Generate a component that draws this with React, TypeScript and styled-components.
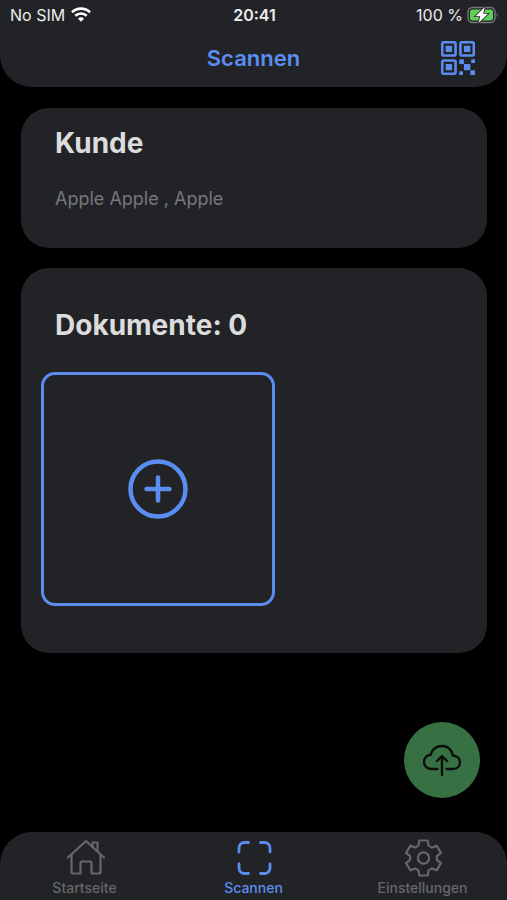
import React from "react";
import styled, { createGlobalStyle } from "styled-components";

const color = {
  page: "#000000",
  panel: "#222326",
  accent: "#5b8df0",
  text: "#dcdcdc",
  status: "#ececec",
  muted: "#77787a",
  tab: "#66676a",
  upload: "#377143",
  battery: "#5fce5b",
};

const GlobalStyle = createGlobalStyle`
  * { box-sizing: border-box; }
  body {
    margin: 0;
    background: ${color.page};
    color: ${color.text};
    font-family: Inter, "Liberation Sans", sans-serif;
  }
  button { font: inherit; }
  svg { display: block; }
`;

const Screen = styled.div`
  min-height: 100vh;
  display: flex;
  flex-direction: column;
`;

const Header = styled.header`
  background: ${color.panel};
  border-radius: 0 0 32px 32px;
`;

const StatusBar = styled.div`
  display: grid;
  grid-template-columns: 1fr auto 1fr;
  align-items: center;
  height: 29px;
  padding: 0 8px 0 10px;
  color: ${color.status};
  font-size: 16px;
  line-height: 20px;
`;

const StatusGroup = styled.div<{ $end?: boolean }>`
  display: flex;
  align-items: center;
  gap: ${(p) => (p.$end ? 4 : 6)}px;
  justify-content: ${(p) => (p.$end ? "flex-end" : "flex-start")};
`;

const Clock = styled.time`
  font-weight: 600;
`;

const TitleBar = styled.div`
  display: grid;
  grid-template-columns: 1fr auto 1fr;
  align-items: center;
  height: 58px;
  padding: 0 32px;
`;

const Title = styled.h1`
  grid-column: 2;
  margin: 0;
  color: ${color.accent};
  font-size: 22px;
  line-height: 28px;
  font-weight: 600;
`;

const IconButton = styled.button`
  justify-self: end;
  padding: 0;
  border: 0;
  background: none;
  color: ${color.accent};
  cursor: pointer;
`;

const Main = styled.main`
  flex: 1;
  display: flex;
  flex-direction: column;
  gap: 20px;
  padding: 21px 20px 34px 21px;
`;

const Card = styled.section<{ $roomy?: boolean }>`
  background: ${color.panel};
  border-radius: 28px;
  padding: ${(p) => (p.$roomy ? "40px 20px 47px" : "18px 20px 37px")};
`;

const CardTitle = styled.h2`
  margin: 0;
  padding-left: 14px;
  font-size: 28px;
  line-height: 34px;
  font-weight: 700;
`;

const CardText = styled.p`
  margin: 27px 0 0;
  padding-left: 14px;
  color: ${color.muted};
  font-size: 18px;
  line-height: 24px;
`;

const AddTile = styled.button`
  display: flex;
  align-items: center;
  justify-content: center;
  width: 55%;
  aspect-ratio: 1;
  margin-top: 30px;
  padding: 0;
  border: 3px solid ${color.accent};
  border-radius: 14px;
  background: none;
  color: ${color.accent};
  cursor: pointer;
`;

const UploadButton = styled.button`
  display: flex;
  align-items: center;
  justify-content: center;
  align-self: flex-end;
  width: 76px;
  height: 76px;
  margin-top: auto;
  margin-right: 7px;
  padding: 0;
  border: 0;
  border-radius: 50%;
  background: ${color.upload};
  color: #0a0f0b;
  cursor: pointer;
`;

const TabBar = styled.nav`
  display: grid;
  grid-template-columns: repeat(3, 1fr);
  height: 68px;
  background: ${color.panel};
  border-radius: 32px 32px 0 0;
`;

const Tab = styled.a<{ $active?: boolean }>`
  display: flex;
  flex-direction: column;
  align-items: center;
  gap: 3px;
  padding-top: 5px;
  color: ${(p) => (p.$active ? color.accent : color.tab)};
  font-size: 14px;
  line-height: 16px;
  font-weight: 500;
  text-decoration: none;
`;

const WifiIcon = () => (
  <svg width="20" height="15" viewBox="0 0 20 15" fill="none" stroke="#fff" strokeWidth="2.6" aria-hidden="true">
    <path d="M1 5.2a13 13 0 0 1 18 0" />
    <path d="M4.3 8.8a8.2 8.2 0 0 1 11.4 0" />
    <path d="M10 14.8 7 11.7a4.3 4.3 0 0 1 6 0z" fill="#fff" stroke="none" />
  </svg>
);

const BatteryIcon = () => (
  <svg width="32" height="18" viewBox="0 0 32 18" aria-hidden="true">
    <rect x="1" y="1.5" width="27" height="15" rx="4.5" fill="none" stroke="#77797c" strokeWidth="1.4" />
    <rect x="3" y="3.5" width="23" height="11" rx="2.5" fill={color.battery} />
    <path d="M29.6 7v4c1.4-.5 1.4-3.5 0-4z" fill="#77797c" />
    <path
      d="M17.8 1 8.5 10.2h4.800L11.500 17 21 7.800h-4.800z"
      fill="#fff"
      stroke={color.panel}
      strokeWidth="1.6"
      paintOrder="stroke"
    />
  </svg>
);

const QrIcon = () => (
  <svg width="34" height="34" viewBox="32 32 448 448" fill="currentColor" aria-hidden="true">
    <g fill="none" stroke="currentColor" strokeWidth="34">
      <rect x="48" y="48" width="176" height="176" rx="20" />
      <rect x="288" y="48" width="176" height="176" rx="20" />
      <rect x="48" y="288" width="176" height="176" rx="20" />
    </g>
    <rect x="94" y="94" width="84" height="84" rx="8" />
    <rect x="334" y="94" width="84" height="84" rx="8" />
    <rect x="94" y="334" width="84" height="84" rx="8" />
    <rect x="334" y="334" width="84" height="84" rx="8" />
    <rect x="272" y="272" width="62" height="62" rx="8" />
    <rect x="418" y="418" width="62" height="62" rx="8" />
    <rect x="430" y="272" width="50" height="50" rx="8" />
    <rect x="272" y="430" width="50" height="50" rx="8" />
  </svg>
);

const AddIcon = () => (
  <svg width="60" height="60" viewBox="0 0 60 60" fill="none" stroke="currentColor" strokeWidth="4.5" strokeLinecap="round" aria-hidden="true">
    <circle cx="30" cy="30" r="27.5" />
    <path d="M30 18.500v23M18.500 30h23" />
  </svg>
);

const CloudUploadIcon = () => (
  <svg width="40" height="34" viewBox="0 0 40 34" fill="none" stroke="currentColor" strokeWidth="2.4" strokeLinecap="round" strokeLinejoin="round" aria-hidden="true">
    <path d="M15.500 26H9.500C4.800 26 2 22.800 2 18.800c0-3.900 2.800-6.600 6.700-7.100C10.200 6.200 14.500 3 20 3c5.900 0 10 4 10.800 9.500 4.300.3 7.200 2.900 7.200 6.800 0 4.200-3 6.700-7.200 6.700h-6.300" />
    <path d="M20 32V13.500M15 18l5-4.800 5 4.800" />
  </svg>
);

const HomeIcon = () => (
  <svg width="40" height="40" viewBox="0 0 40 40" fill="none" stroke="currentColor" strokeWidth="2.2" strokeLinecap="round" strokeLinejoin="round" aria-hidden="true">
    <path d="M3 20.500 21 4 39 20.500" />
    <path d="M6.500 17.500V35a1.500 1.500 0 0 0 1.500 1.500H15.500V26a1.500 1.500 0 0 1 1.500-1.500h8A1.500 1.500 0 0 1 26.500 26v10.500h7.500a1.500 1.500 0 0 0 1.500-1.500V17.500" />
    <path d="M27.500 9.500V5.500H32.500V14" />
  </svg>
);

const ScanIcon = () => (
  <svg width="40" height="40" viewBox="0 0 40 40" fill="none" stroke="currentColor" strokeWidth="2.8" strokeLinecap="round" aria-hidden="true">
    <path d="M5 15V11a5.500 5.500 0 0 1 5.500-5.500h4M26.500 5.500h4a5.500 5.500 0 0 1 5.500 5.500v4M36 27v4a5.500 5.500 0 0 1-5.500 5.500h-4M14.500 36.500h-4A5.500 5.500 0 0 1 5 31v-4" />
  </svg>
);

const GearIcon = () => (
  <svg width="40" height="40" viewBox="0 0 40 40" fill="none" stroke="currentColor" strokeWidth="2.2" strokeLinejoin="round" aria-hidden="true">
    <path d="M16.300 3.500h8.400l.8 5.100 3.500 2 4.700-1.900 4.200 7.200-4 3.200v3.800l4 3.200-4.200 7.200-4.700-1.900-3.500 2-.8 5.100h-8.400l-.8-5.100-3.500-2-4.700 1.900-4.200-7.200 4-3.200v-3.800l-4-3.200 4.200-7.200 4.700 1.900 3.500-2z" />
    <circle cx="20.5" cy="21" r="5.6" />
  </svg>
);

const tabs = [
  { id: "home", label: "Startseite", Icon: HomeIcon },
  { id: "scan", label: "Scannen", Icon: ScanIcon, active: true },
  { id: "settings", label: "Einstellungen", Icon: GearIcon },
];

export default function App() {
  return (
    <>
      <GlobalStyle />
      <Screen>
        <Header>
          <StatusBar>
            <StatusGroup>
              <span>No SIM</span>
              <WifiIcon />
            </StatusGroup>
            <Clock>20:41</Clock>
            <StatusGroup $end>
              <span>100 %</span>
              <BatteryIcon />
            </StatusGroup>
          </StatusBar>
          <TitleBar>
            <Title>Scannen</Title>
            <IconButton type="button" aria-label="QR-Code">
              <QrIcon />
            </IconButton>
          </TitleBar>
        </Header>
        <Main>
          <Card>
            <CardTitle>Kunde</CardTitle>
            <CardText>Apple Apple , Apple</CardText>
          </Card>
          <Card $roomy>
            <CardTitle>Dokumente: 0</CardTitle>
            <AddTile type="button" aria-label="Dokument hinzufügen">
              <AddIcon />
            </AddTile>
          </Card>
          <UploadButton type="button" aria-label="Hochladen">
            <CloudUploadIcon />
          </UploadButton>
        </Main>
        <TabBar>
          {tabs.map(({ id, label, Icon, active }) => (
            <Tab key={id} href={`#${id}`} $active={active} aria-current={active ? "page" : undefined}>
              <Icon />
              {label}
            </Tab>
          ))}
        </TabBar>
      </Screen>
    </>
  );
}
